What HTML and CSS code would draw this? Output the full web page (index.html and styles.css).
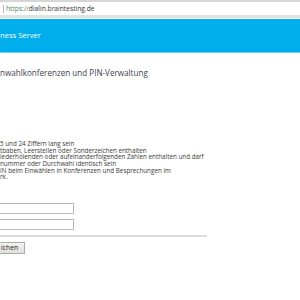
FILE: index.html
```html
<!DOCTYPE html>
<html lang="de">
<head>
<meta charset="utf-8">
<link rel="stylesheet" href="styles.css">
</head>
<body>
<div class="browser-bar">
  <span class="sep"></span>
  <span class="url"><span class="scheme">https://</span>dialin.braintesting.de</span>
</div>
<header class="banner">ness Server</header>
<main class="content">
  <h1 class="title">nwahlkonferenzen und PIN-Verwaltung</h1>
  <ul class="rules">
    <li>5 und 24 Ziffern lang sein</li>
    <li>tbaben, Leerstellen oder Sonderzeichen enthalten</li>
    <li>iederholenden oder aufeinanderfolgenden Zahlen enthalten und darf</li>
    <li>nummer oder Durchwahl identisch sein</li>
    <li>IN beim Einwählen in Konferenzen und Besprechungen im</li>
    <li>rk.</li>
  </ul>
  <form class="pin-form">
    <input class="field" type="password">
    <input class="field" type="password">
    <div class="divider"></div>
    <button class="btn" type="button">ichen</button>
  </form>
</main>
</body>
</html>
```
FILE: styles.css
```css
html, body {
  margin: 0;
  padding: 0;
  background: #ffffff;
  font-family: "Open Sans", "DejaVu Sans", sans-serif;
}
.browser-bar {
  height: 13px;
  border-top: 2px solid #d6d6d6;
  border-bottom: 3px solid #e2e2e2;
  display: flex;
  align-items: center;
  gap: 2px;
  padding-left: 3px;
  background: #fff;
}
.sep {
  width: 1px;
  height: 8px;
  background: #b8b8b8;
}
.url {
  font-size: 6.7px;
  color: #333;
  line-height: 13px;
}
.scheme {
  color: #4f8a5e;
}
.banner {
  margin-top: 1px;
  height: 33px;
  background: #00aeeb;
  border-bottom: 1px solid #6fd0f3;
  color: #ffffff;
  font-size: 7.6px;
  line-height: 33px;
}
.content {
  padding-top: 14px;
}
.title {
  margin: 0;
  font-size: 8.1px;
  line-height: 12px;
  font-weight: 400;
  color: #3d4450;
}
.rules {
  list-style: none;
  margin: 62px 0 0;
  padding: 0;
  font-size: 6.3px;
  line-height: 6.65px;
  color: #3a3a3a;
}
.pin-form {
  margin-top: 22px;
  display: flex;
  flex-direction: column;
  align-items: flex-start;
}
.field {
  box-sizing: border-box;
  width: 74px;
  height: 11px;
  margin: 0 0 5px;
  padding: 0;
  border: 1px solid #b9b9b9;
  border-left: none;
  background: #fff;
}
.divider {
  width: 207px;
  height: 2px;
  background: #dcdcdc;
}
.btn {
  margin-top: 5px;
  box-sizing: border-box;
  width: 25px;
  height: 12px;
  padding: 0 0 0 1px;
  border: 1px solid #acacac;
  border-left: none;
  background: linear-gradient(#f2f2f2, #e0e0e0);
  font-family: "Open Sans", "DejaVu Sans", sans-serif;
  font-size: 6.8px;
  line-height: 10px;
  color: #222;
  text-align: left;
}
```
